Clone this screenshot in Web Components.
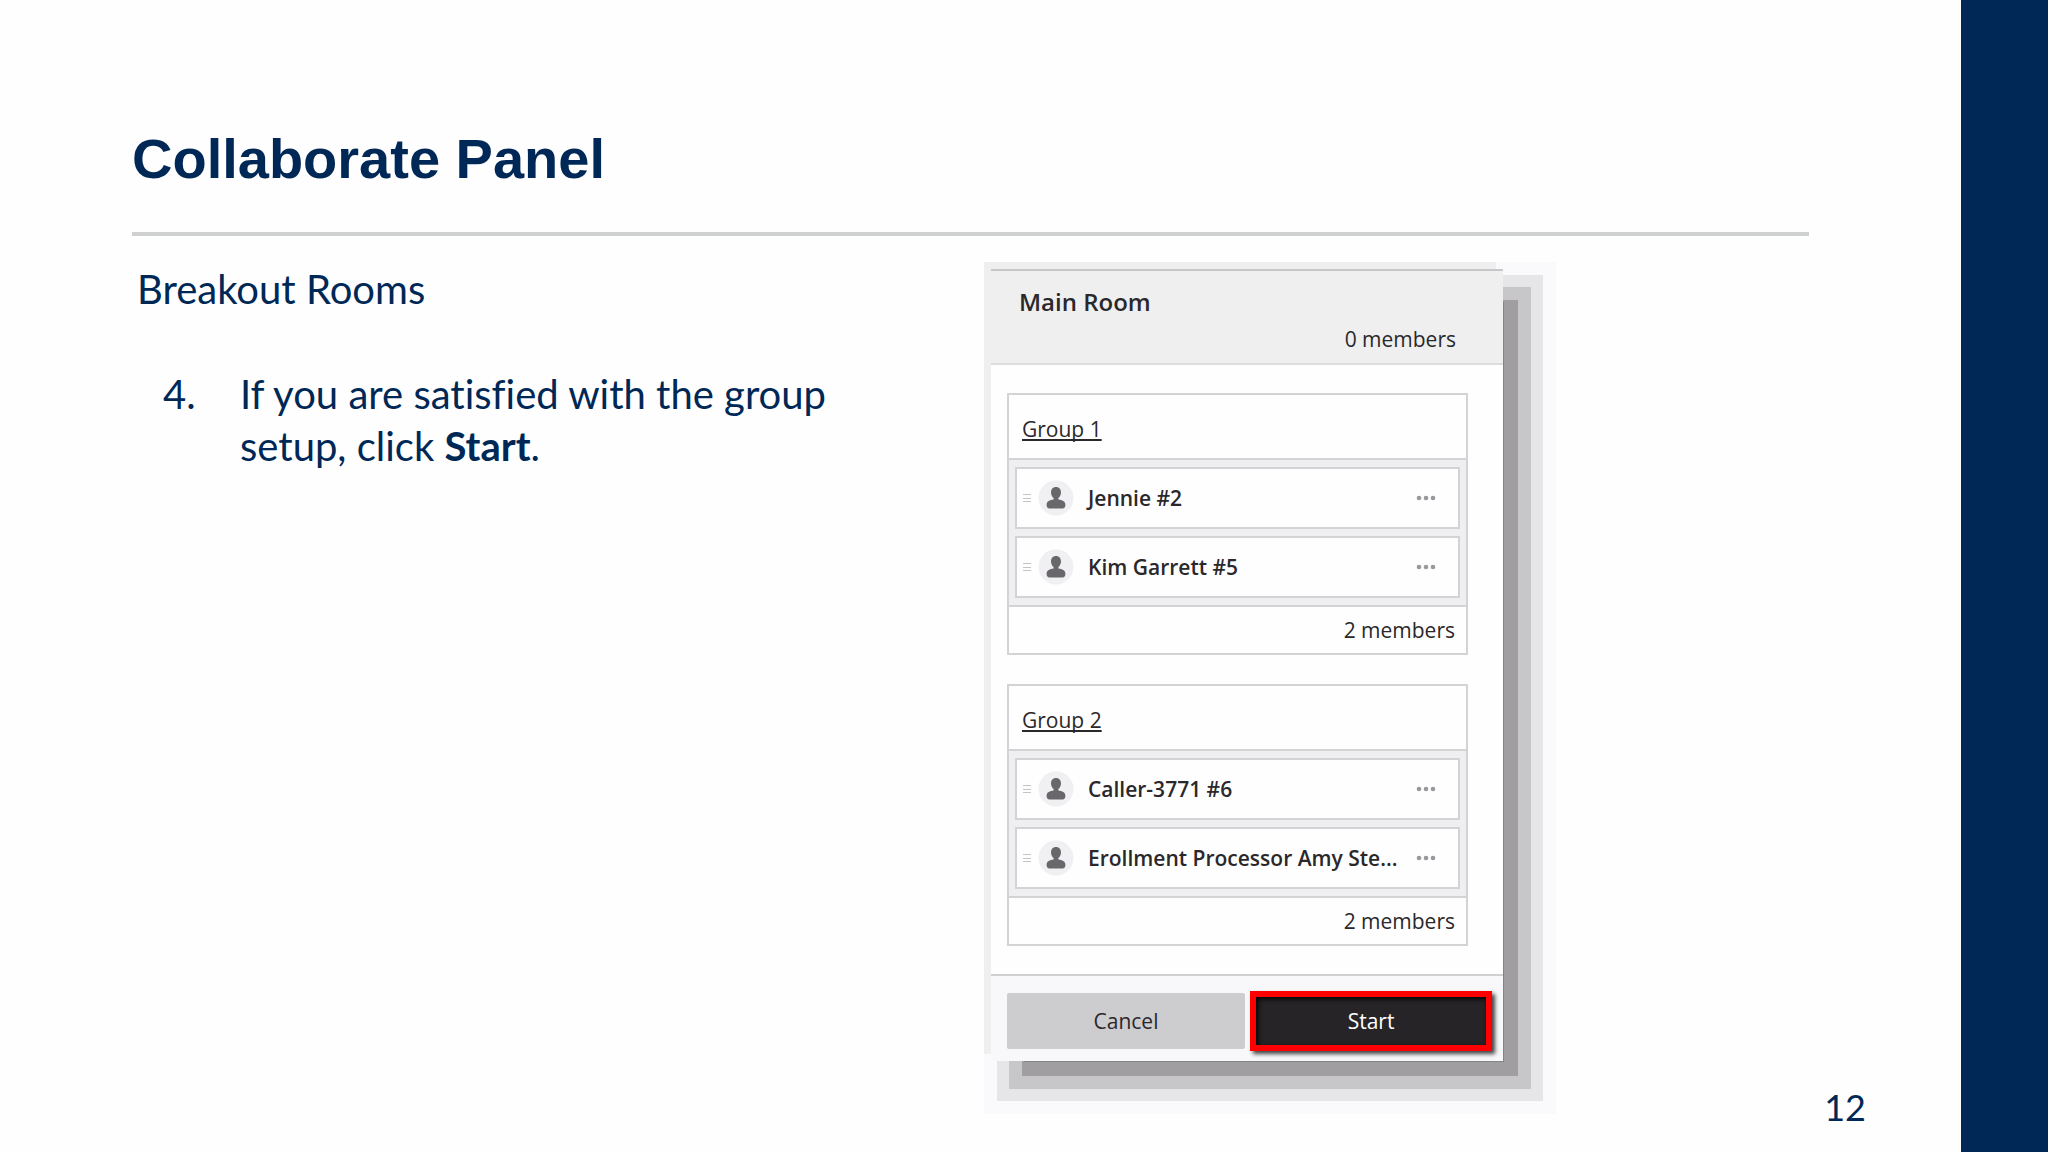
<!DOCTYPE html>
<html lang="en">
<head>
<meta charset="utf-8">
<title>Collaborate Panel</title>
<style>
  html, body { margin: 0; }
  body { background: #fefefe; color: #002856; font-family: Lato, sans-serif; font-variant-ligatures: none; }
</style>
</head>
<body>
<slide-page>
  <h1 slot="title">Collaborate Panel</h1>
  <slide-notes slot="notes" heading="Breakout Rooms" start="4"><span>If you are satisfied with the group</span> <span>setup, click</span> <b>Start</b><span>.</span></slide-notes>
  <breakout-panel slot="figure" room="Main Room" count="0 members">
    <room-group name="Group 1" count="2 members">
      <room-member>Jennie #2</room-member>
      <room-member>Kim Garrett #5</room-member>
    </room-group>
    <room-group name="Group 2" count="2 members">
      <room-member>Caller-3771 #6</room-member>
      <room-member>Erollment Processor Amy Ste...</room-member>
    </room-group>
  </breakout-panel>
  <span slot="page">12</span>
</slide-page>

<script>
const mount = (el, html) => { el.attachShadow({ mode: 'open' }).innerHTML = html; };

customElements.define('slide-page', class extends HTMLElement {
  connectedCallback() {
    mount(this, `
      <style>
        :host { display: flex; min-height: 100vh; }
        main { flex: 1; min-width: 0; display: flex; flex-direction: column; box-sizing: border-box; padding: 127px 152px 21px 132px; }
        header { border-bottom: 4px solid #cfd0d0; padding-bottom: 41px; }
        ::slotted(h1) { margin: 0; font: bold 56px/64px "Liberation Sans", Arial, sans-serif; }
        .content { display: grid; grid-template-columns: minmax(0, 1fr) 512px 306px; align-items: start; padding-top: 33px; }
        footer { margin-top: auto; align-self: flex-end; font-size: 36px; line-height: 48px; margin-right: -57px; }
        aside { width: 87px; background: #002856; }
      </style>
      <main>
        <header><slot name="title"></slot></header>
        <div class="content"><slot name="notes"></slot><slot name="figure"></slot></div>
        <footer><slot name="page"></slot></footer>
      </main>
      <aside></aside>`);
  }
});

customElements.define('slide-notes', class extends HTMLElement {
  connectedCallback() {
    mount(this, `
      <style>
        :host { display: block; font-size: 40px; line-height: 52px; padding-left: 5px; }
        h2 { font: inherit; margin: -6px 0 53px; }
        ol { margin: 0; padding: 0 0 0 26px; list-style: none; }
        li { display: grid; grid-template-columns: 77px minmax(0, 600px); }
      </style>
      <h2>${this.getAttribute('heading')}</h2>
      <ol><li><span>${this.getAttribute('start')}.</span><div><slot></slot></div></li></ol>`);
  }
});

customElements.define('breakout-panel', class extends HTMLElement {
  connectedCallback() {
    mount(this, `
      <style>
        :host {
          display: block; background: #fefefe; color: #2a282b;
          font: 21px/28px "Open Sans", "Noto Sans", sans-serif;
          box-shadow:
            17px 17px 0 -16px #858386,
            23px 23px 0 -8px #a09ea1,
            23px 23px 0 5px #c7c6c8,
            23px 23px 0 17px #e6e5e7,
            -7px -7px 0 0 #efeff0,
            23px 23px 0 30px #fafafc;
        }
        header { background: #efeff0; border-top: 2px solid #c7c7c9; border-bottom: 2px solid #dddddf; padding: 15px 47px 10px 28px; }
        h3 { margin: 0; font-size: 24px; line-height: 32px; font-weight: 600; }
        header p { margin: 7px 0 0; text-align: right; }
        .groups { display: grid; gap: 29px; padding: 28px 35px 28px 16px; }
        footer { display: grid; grid-template-columns: 238fr 242fr; gap: 5px; align-items: center; background: #f8f7fa; border-top: 2px solid #d0cfd2; padding: 15px 11px 10px 16px; }
        button { box-sizing: border-box; height: 56px; border: 0; border-radius: 2px; padding: 0; font: inherit; background: #cdccce; color: #2a282b; }
        .start { height: 60px; border: 6px solid #f00; border-radius: 0; background: #262427; color: #fff; box-shadow: 3px 3px 4px #444, inset 2px 2px 5px #000; }
      </style>
      <header><h3>${this.getAttribute('room')}</h3><p>${this.getAttribute('count')}</p></header>
      <div class="groups"><slot></slot></div>
      <footer><button type="button">Cancel</button><button type="button" class="start">Start</button></footer>`);
  }
});

customElements.define('room-group', class extends HTMLElement {
  connectedCallback() {
    mount(this, `
      <style>
        :host { display: block; border: 2px solid #d3d2d5; }
        .name { padding: 20px 13px 15px; }
        a { color: inherit; text-decoration: underline; text-decoration-thickness: 2px; text-underline-offset: 2px; text-decoration-skip-ink: none; }
        .list { display: grid; gap: 7px; background: #efeef1; border: solid #d3d2d5; border-width: 2px 0; padding: 7px 6px; }
        .count { text-align: right; padding: 9px 11px; }
      </style>
      <div class="name"><a href="#">${this.getAttribute('name')}</a></div>
      <div class="list"><slot></slot></div>
      <div class="count">${this.getAttribute('count')}</div>`);
  }
});

customElements.define('room-member', class extends HTMLElement {
  connectedCallback() {
    mount(this, `
      <style>
        :host { display: flex; align-items: center; box-sizing: border-box; height: 62px; padding: 0 22px 0 6px; border: 2px solid #d3d2d5; background: #fefefe; font-weight: 600; }
        svg { display: block; flex: none; }
        .avatar { margin: 0 14px 0 7px; }
        .name { flex: 1; min-width: 0; white-space: nowrap; }
        button { border: 0; padding: 0; background: none; }
      </style>
      <svg width="8" height="10" viewBox="0 0 8 10" stroke="#c4c3c6" stroke-width="1"><path d="M0 1.500h8M0 5.500h8M0 8.500h8"/></svg>
      <svg class="avatar" width="36" height="36" viewBox="0 0 36 36">
        <circle cx="18" cy="18" r="17.500" fill="#f0eff1"/>
        <path fill="#69676b" d="M18 7c-3 0-5 2.200-5 5.300 0 2.400 1 4.600 2.600 5.600v1.700c-3.600.5-7 1.600-7 5.200 0 2.600 1 3.700 3 3.700h12.800c2 0 3-1.100 3-3.700 0-3.600-3.400-4.700-7-5.200v-1.700c1.600-1 2.600-3.200 2.600-5.600C23 9.200 21 7 18 7z"/>
      </svg>
      <span class="name"><slot></slot></span>
      <button type="button" aria-label="Options"><svg width="20" height="6" viewBox="0 0 20 6" fill="#9a989c"><circle cx="3" cy="3" r="2.300"/><circle cx="10" cy="3" r="2.300"/><circle cx="17" cy="3" r="2.300"/></svg></button>`);
  }
});
</script>
</body>
</html>
